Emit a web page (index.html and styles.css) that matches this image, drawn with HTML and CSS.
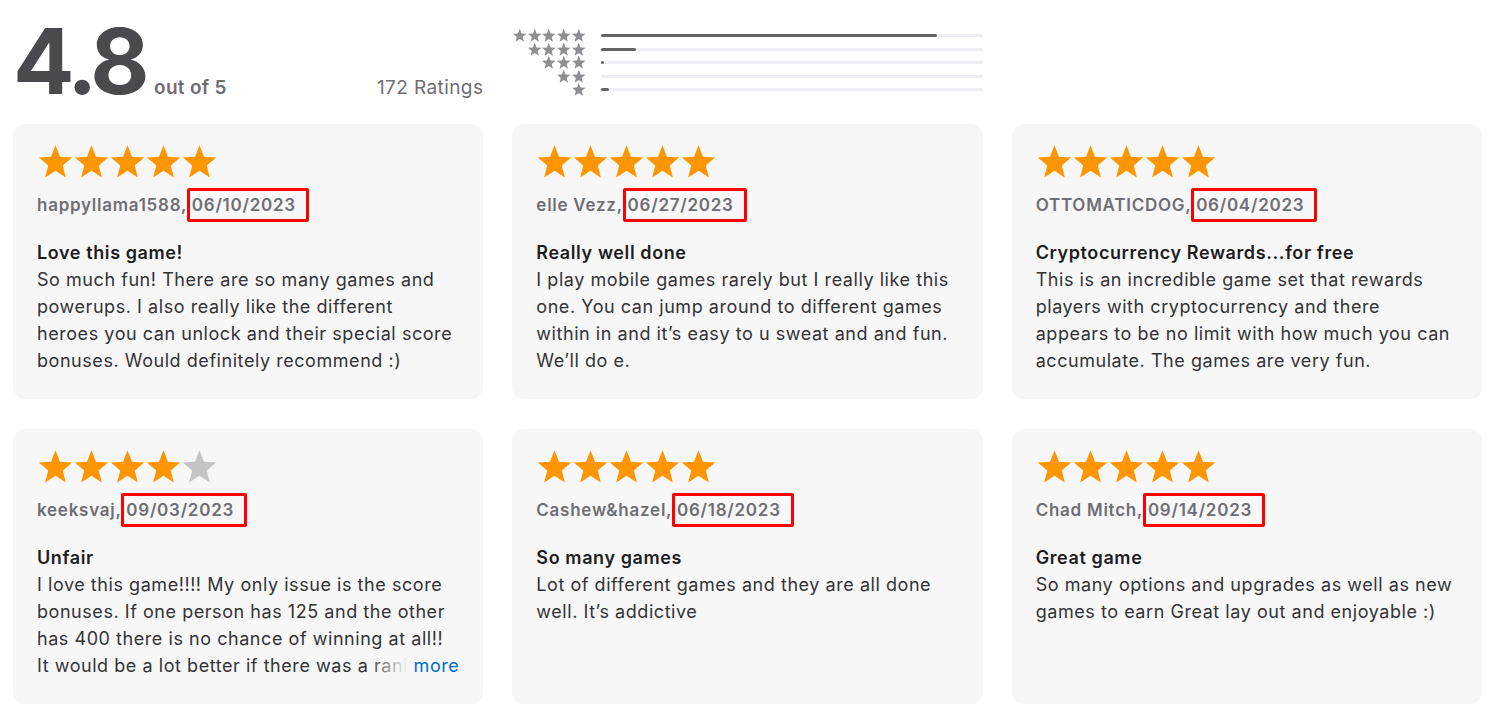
FILE: index.html
```html
<!DOCTYPE html>
<html>
<head>
    <title>Ratings and Reviews</title>
    <link rel="stylesheet" href="styles.css">
</head>
<body>
    <svg width="0" height="0" class="defs">
        <defs>
            <symbol id="star" viewBox="0 0 24 24">
                <polygon points="12,1.2 14.9,8.6 22.8,9.1 16.7,14.2 18.7,22 12,17.6 5.3,22 7.3,14.2 1.2,9.1 9.1,8.6"/>
            </symbol>
        </defs>
    </svg>

    <div class="page">
        <div class="summary">
            <div class="score">
                <span class="big">4.8</span>
                <span class="out-of">out of 5</span>
                <span class="count">172 Ratings</span>
            </div>
            <div class="histogram">
                <div class="hist-row">
                    <div class="mini-stars"><svg><use href="#star"/></svg><svg><use href="#star"/></svg><svg><use href="#star"/></svg><svg><use href="#star"/></svg><svg><use href="#star"/></svg></div>
                    <div class="track"><div class="fill" style="width: 88%"></div></div>
                </div>
                <div class="hist-row">
                    <div class="mini-stars"><svg><use href="#star"/></svg><svg><use href="#star"/></svg><svg><use href="#star"/></svg><svg><use href="#star"/></svg></div>
                    <div class="track"><div class="fill" style="width: 9%"></div></div>
                </div>
                <div class="hist-row">
                    <div class="mini-stars"><svg><use href="#star"/></svg><svg><use href="#star"/></svg><svg><use href="#star"/></svg></div>
                    <div class="track"><div class="fill" style="width: 0.6%"></div></div>
                </div>
                <div class="hist-row">
                    <div class="mini-stars"><svg><use href="#star"/></svg><svg><use href="#star"/></svg></div>
                    <div class="track"><div class="fill" style="width: 0%"></div></div>
                </div>
                <div class="hist-row">
                    <div class="mini-stars"><svg><use href="#star"/></svg></div>
                    <div class="track"><div class="fill" style="width: 2%"></div></div>
                </div>
            </div>
        </div>

        <div class="reviews">
            <div class="card">
                <div class="stars"><svg><use href="#star"/></svg><svg><use href="#star"/></svg><svg><use href="#star"/></svg><svg><use href="#star"/></svg><svg><use href="#star"/></svg></div>
                <div class="author">happyllama1588, <span class="date">06/10/2023</span></div>
                <h3>Love this game!</h3>
                <p class="body">So much fun! There are so many games and powerups. I also really like the different heroes you can unlock and their special score bonuses. Would definitely recommend :)</p>
            </div>

            <div class="card">
                <div class="stars"><svg><use href="#star"/></svg><svg><use href="#star"/></svg><svg><use href="#star"/></svg><svg><use href="#star"/></svg><svg><use href="#star"/></svg></div>
                <div class="author">elle Vezz, <span class="date">06/27/2023</span></div>
                <h3>Really well done</h3>
                <p class="body">I play mobile games rarely but I really like this one. You can jump around to different games within in and it’s easy to u sweat and and fun. We’ll do e.</p>
            </div>

            <div class="card">
                <div class="stars"><svg><use href="#star"/></svg><svg><use href="#star"/></svg><svg><use href="#star"/></svg><svg><use href="#star"/></svg><svg><use href="#star"/></svg></div>
                <div class="author">OTTOMATICDOG, <span class="date">06/04/2023</span></div>
                <h3>Cryptocurrency Rewards...for free</h3>
                <p class="body">This is an incredible game set that rewards players with cryptocurrency and there appears to be no limit with how much you can accumulate. The games are very fun.</p>
            </div>

            <div class="card">
                <div class="stars"><svg><use href="#star"/></svg><svg><use href="#star"/></svg><svg><use href="#star"/></svg><svg><use href="#star"/></svg><svg class="off"><use href="#star"/></svg></div>
                <div class="author">keeksvaj, <span class="date">09/03/2023</span></div>
                <h3>Unfair</h3>
                <div class="body clamp">
                    <p>I love this game!!!! My only issue is the score bonuses. If one person has 125 and the other has 400 there is no chance of winning at all!! It would be a lot better if there was a ranking system that matched players</p>
                    <a class="more" href="#">more</a>
                </div>
            </div>

            <div class="card">
                <div class="stars"><svg><use href="#star"/></svg><svg><use href="#star"/></svg><svg><use href="#star"/></svg><svg><use href="#star"/></svg><svg><use href="#star"/></svg></div>
                <div class="author">Cashew&amp;hazel, <span class="date">06/18/2023</span></div>
                <h3>So many games</h3>
                <p class="body">Lot of different games and they are all done well. It’s addictive</p>
            </div>

            <div class="card">
                <div class="stars"><svg><use href="#star"/></svg><svg><use href="#star"/></svg><svg><use href="#star"/></svg><svg><use href="#star"/></svg><svg><use href="#star"/></svg></div>
                <div class="author">Chad Mitch, <span class="date">09/14/2023</span></div>
                <h3>Great game</h3>
                <p class="body">So many options and upgrades as well as new games to earn Great lay out and enjoyable :)</p>
            </div>
        </div>
    </div>
</body>
</html>
```

FILE: styles.css
```css
body {
    margin: 0;
    background: #fff;
    font-family: 'Inter', 'Noto Sans', sans-serif;
    color: #1d1d1f;
}
.defs {
    position: absolute;
}
.page {
    padding: 0 16px 0 13px;
}
.summary {
    display: grid;
    grid-template-columns: repeat(3, 1fr);
    column-gap: 29px;
    height: 124px;
}
.score {
    display: flex;
    align-items: baseline;
    padding-top: 10px;
    height: 100px;
}
.big {
    font-size: 91px;
    font-weight: 700;
    letter-spacing: -4.5px;
    color: #4a4a4e;
    line-height: 102px;
}
.out-of {
    font-size: 19px;
    font-weight: 600;
    letter-spacing: 0.3px;
    color: #6e6e73;
    margin-left: 9px;
}
.count {
    margin-left: auto;
    font-size: 19px;
    letter-spacing: 0.4px;
    color: #6e6e73;
}
.histogram {
    padding-top: 29px;
    display: flex;
    flex-direction: column;
}
.hist-row {
    display: flex;
    align-items: center;
    height: 13.5px;
}
.mini-stars {
    width: 74px;
    display: flex;
    justify-content: flex-end;
    margin-right: 15px;
}
.mini-stars svg {
    width: 15.5px;
    height: 15px;
    margin-left: -0.8px;
    fill: #8e8e93;
}
.track {
    flex: 1;
    height: 3px;
    border-radius: 2px;
    background: #efeff3;
}
.fill {
    height: 100%;
    border-radius: 2px;
    background: #636366;
}
.reviews {
    display: grid;
    grid-template-columns: repeat(3, 1fr);
    column-gap: 29px;
    row-gap: 30px;
}
.card {
    background: #f7f7f7;
    border-radius: 12px;
    height: 275px;
    box-sizing: border-box;
    padding: 19px 24px 0 24px;
}
.stars {
    display: flex;
    height: 38px;
}
.stars svg {
    width: 37px;
    height: 38px;
    margin-right: -1px;
    fill: #ff9500;
}
.stars svg.off {
    fill: #c4c4c4;
}
.author {
    margin-top: 12px;
    font-size: 17px;
    font-weight: 600;
    letter-spacing: 0.75px;
    line-height: 24px;
    color: #6e6e73;
}
.date {
    position: relative;
}
.date::after {
    content: '';
    position: absolute;
    top: -7px;
    bottom: -7px;
    left: -5px;
    right: -13px;
    border: 3px solid #f00;
    border-radius: 2px;
}
h3 {
    margin: 22px 0 0;
    font-size: 18px;
    font-weight: 600;
    letter-spacing: 0.6px;
    line-height: 27px;
}
.body {
    margin: 0;
    font-size: 18px;
    letter-spacing: 0.55px;
    line-height: 27px;
    color: #333336;
}
.clamp {
    position: relative;
    height: 108px;
    overflow: hidden;
}
.clamp p {
    margin: 0;
}
.more {
    position: absolute;
    right: 0;
    bottom: 0;
    line-height: 27px;
    padding-left: 46px;
    background: linear-gradient(to right, rgba(247, 247, 247, 0), #f7f7f7 40px);
    color: #0070c9;
    text-decoration: none;
}
```
